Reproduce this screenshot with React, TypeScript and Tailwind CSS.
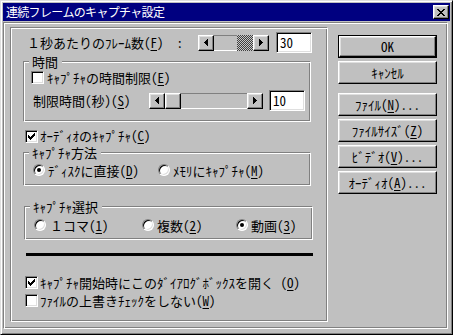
const FONT = "font-['Noto_Sans_Mono_CJK_JP','Noto_Sans_CJK_JP',sans-serif]";

const raised =
  "border border-t-white border-l-white border-r-black border-b-black shadow-[inset_-1px_-1px_#808080,inset_1px_1px_#dfdfdf] bg-[#c0c0c0]";
const sunken =
  "border border-t-[#808080] border-l-[#808080] border-r-white border-b-white shadow-[inset_1px_1px_#000,inset_-1px_-1px_#dfdfdf] bg-white";
const etched =
  "border border-t-[#808080] border-l-[#808080] border-r-white border-b-white shadow-[inset_1px_1px_#fff,inset_-1px_-1px_#808080]";

// tiny bitmap glyphs (close X, arrows, check)
function Pix({ rows }: { rows: string[] }) {
  const h = rows.length;
  const w = rows[0].length;
  return (
    <svg width={w} height={h} viewBox={`0 0 ${w} ${h}`} shapeRendering="crispEdges">
      {rows.flatMap((r, y) =>
        [...r].map((c, x) => (c === "#" ? <rect key={`${x}-${y}`} x={x} y={y} width="1" height="1" fill="#000" /> : null))
      )}
    </svg>
  );
}

const CLOSE = ["##....##", ".##..##.", "..####..", "...##...", "..####..", ".##..##.", "##....##"];
const LEFT = ["...#", "..##", ".###", "####", ".###", "..##", "...#"];
const RIGHT = ["#...", "##..", "###.", "####", "###.", "##..", "#..."];
const CHECK = ["......#", ".....##", "#...###", "##.###.", "#####..", ".###...", "..#...."];

function M({ k }: { k: string }) {
  return <span className="underline underline-offset-2">{k}</span>;
}

function Check({ checked }: { checked?: boolean }) {
  return (
    <span className={`flex items-center justify-center w-[13px] h-[13px] shrink-0 ${sunken}`}>
      {checked && <Pix rows={CHECK} />}
    </span>
  );
}

function Radio({ checked }: { checked?: boolean }) {
  return (
    <span
      className={`flex items-center justify-center w-[12px] h-[12px] shrink-0 rounded-full ${sunken}`}
    >
      {checked && <span className="w-[4px] h-[4px] rounded-full bg-black" />}
    </span>
  );
}

function ScrollBar({ w, pre, dither }: { w: string; pre?: string; dither?: boolean }) {
  const track = "h-full bg-[#c0c0c0] border-t border-t-[#808080] border-b border-b-white";
  return (
    <div className={`flex h-[16px] ${w}`}>
      <div className={`w-[16px] h-full flex items-center justify-center ${raised}`}>
        <Pix rows={LEFT} />
      </div>
      {pre && <div className={`${pre} ${track}`} />}
      {dither ? (
        <div className="w-[16px] h-full bg-[repeating-conic-gradient(#404040_0_25%,#c8c8c8_0_50%)] bg-[length:2px_2px]" />
      ) : (
        <div className={`w-[16px] h-full ${raised}`} />
      )}
      <div className={`flex-1 ${track}`} />
      <div className={`w-[16px] h-full flex items-center justify-center ${raised}`}>
        <Pix rows={RIGHT} />
      </div>
    </div>
  );
}

function Edit({ value }: { value: string }) {
  return (
    <div className={`w-[36px] h-[21px] flex items-center pl-[3px] ${sunken}`}>{value}</div>
  );
}

function Group({ label, box, children }: { label: string; box: string; children: React.ReactNode }) {
  return (
    <div className={`relative ${etched} ${box}`}>
      <span className="absolute -top-[7px] left-[5px] pl-[3px] pr-[4px] bg-[#c0c0c0] leading-[13px]">{label}</span>
      {children}
    </div>
  );
}

function Button({ children, def, className = "" }: { children: React.ReactNode; def?: boolean; className?: string }) {
  if (def) {
    return (
      <div className={`h-[23px] border border-black ${className}`}>
        <div className={`h-full flex items-center justify-center ${raised}`}>{children}</div>
      </div>
    );
  }
  return <div className={`h-[23px] flex items-center justify-center ${raised} ${className}`}>{children}</div>;
}

export default function App() {
  return (
    <div
      className={`w-[453px] h-[335px] bg-[#c0c0c0] p-[2px] border border-t-[#dfdfdf] border-l-[#dfdfdf] border-r-black border-b-black shadow-[inset_1px_1px_#fff,inset_-1px_-1px_#808080] text-black text-[13px] leading-[15px] ${FONT}`}
    >
      {/* title bar */}
      <div className="flex items-center h-[18px] bg-[#000080] pl-[3px] pr-[1px]">
        <span className="text-white text-[12px] leading-none tracking-[-0.7px]">連続フレームのキャプチャ設定</span>
        <div className={`ml-auto w-[16px] h-[14px] flex items-center justify-center ${raised}`}>
          <Pix rows={CLOSE} />
        </div>
      </div>

      <div className={`mt-[1px] w-[445px] h-[307px] flex items-start ${etched}`}>
        {/* left panel */}
        <div className={`ml-[6px] mt-[4px] w-[318px] h-[295px] flex flex-col items-start ${etched}`}>
          <div className="flex items-center h-[21px] mt-[4px] ml-[16px]">
            <span className="w-[171px] whitespace-pre">
              １秒あたりのﾌﾚｰﾑ数(<M k="F" />)  :
            </span>
            <ScrollBar w="w-[71px]" pre="w-[23px]" dither />
            <div className="ml-[7px]">
              <Edit value="30" />
            </div>
          </div>

          <Group label="時間" box="mt-[8px] ml-[12px] w-[288px] h-[61px]">
            <div className="flex items-center h-[15px] mt-[8px] ml-[7px]">
              <Check />
              <span className="ml-[3px]">
                ｷｬﾌﾟﾁｬの時間制限(<M k="E" />)
              </span>
            </div>
            <div className="flex items-center h-[21px] mt-[5px] ml-[9px]">
              <span className="w-[116px]">
                制限時間(秒)(<M k="S" />)
              </span>
              <ScrollBar w="w-[114px]" />
              <div className="ml-[6px]">
                <Edit value="10" />
              </div>
            </div>
          </Group>

          <div className="flex items-center h-[14px] mt-[7px] ml-[14px]">
            <Check checked />
            <span className="ml-[2px] leading-[14px]">
              ｵｰﾃﾞｨｵのｷｬﾌﾟﾁｬ(<M k="C" />)
            </span>
          </div>

          <Group label="ｷｬﾌﾟﾁｬ方法" box="mt-[9px] ml-[12px] w-[288px] h-[34px]">
            <div className="flex items-center h-[16px] mt-[9px] ml-[9px]">
              <div className="flex items-center w-[125px]">
                <Radio checked />
                <span className="ml-[3px]">
                  ﾃﾞｨｽｸに直接(<M k="D" />)
                </span>
              </div>
              <div className="flex items-center">
                <Radio />
                <span className="ml-[3px]">
                  ﾒﾓﾘにｷｬﾌﾟﾁｬ(<M k="M" />)
                </span>
              </div>
            </div>
          </Group>

          <Group label="ｷｬﾌﾟﾁｬ選択" box="mt-[20px] ml-[13px] w-[289px] h-[34px]">
            <div className="flex items-center h-[16px] mt-[10px] ml-[9px]">
              <div className="flex items-center w-[108px]">
                <Radio />
                <span className="ml-[4px]">
                  １コマ(<M k="1" />)
                </span>
              </div>
              <div className="flex items-center w-[94px]">
                <Radio />
                <span className="ml-[3px]">
                  複数(<M k="2" />)
                </span>
              </div>
              <div className="flex items-center">
                <Radio checked />
                <span className="ml-[3px]">
                  動画(<M k="3" />)
                </span>
              </div>
            </div>
          </Group>

          <div className="mt-[13px] ml-[15px] w-[287px] h-[3px] bg-black" />

          <div className="flex items-center h-[15px] mt-[19px] ml-[14px]">
            <Check checked />
            <span className="ml-[2px] whitespace-pre">
              ｷｬﾌﾟﾁｬ開始時にこのﾀﾞｲｱﾛｸﾞﾎﾞｯｸｽを開く (<M k="O" />)
            </span>
          </div>
          <div className="flex items-center h-[15px] mt-[3px] ml-[14px]">
            <Check />
            <span className="ml-[2px]">
              ﾌｧｲﾙの上書きﾁｪｯｸをしない(<M k="W" />)
            </span>
          </div>
        </div>

        {/* right buttons */}
        <div className="ml-[10px] mt-[12px] w-[99px] flex flex-col">
          <Button def>OK</Button>
          <Button className="mt-[3px]">ｷｬﾝｾﾙ</Button>
          <Button className="mt-[9px]">
            ﾌｧｲﾙ(<M k="N" />)...
          </Button>
          <Button className="mt-[3px]">
            ﾌｧｲﾙｻｲｽﾞ(<M k="Z" />)
          </Button>
          <Button className="mt-[3px]">
            ﾋﾞﾃﾞｵ(<M k="V" />)...
          </Button>
          <Button className="mt-[3px]">
            ｵｰﾃﾞｨｵ(<M k="A" />)...
          </Button>
        </div>
      </div>
    </div>
  );
}
